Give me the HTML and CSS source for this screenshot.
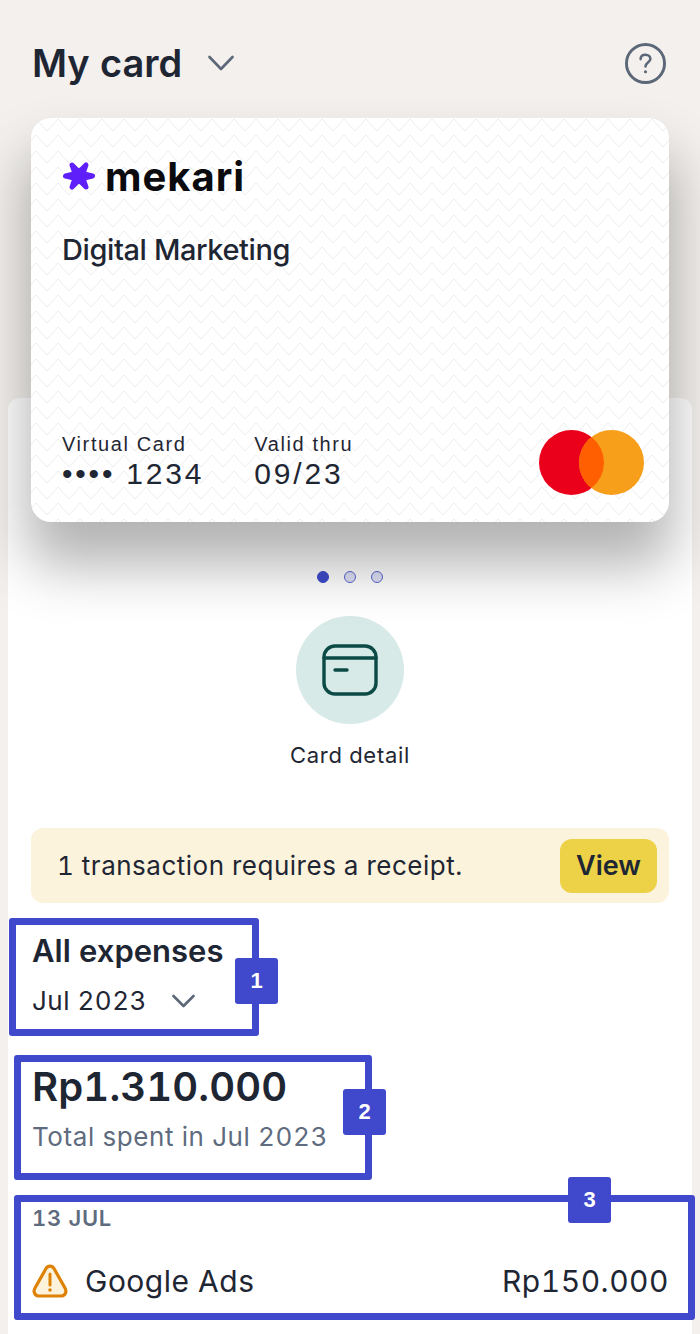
FILE: index.html
```html
<!DOCTYPE html>
<html lang="en">
<head>
  <meta charset="UTF-8" />
  <meta name="viewport" content="width=device-width, initial-scale=1.0" />
  <title>My card</title>
  <link rel="stylesheet" href="styles.css">
</head>
<body>

  <div class="app-container">
    <header class="top-bar">
      <div class="top-title">
        <h1>My card</h1>
        <svg class="chevron" width="26" height="16" viewBox="0 0 26 16"><path d="M1.5 2 L13 14 L24.5 2" /></svg>
      </div>
      <svg class="help-icon" width="41" height="41" viewBox="0 0 42 42">
        <circle cx="21" cy="21" r="19.5" />
        <path d="M16 16.5 C16 13.5 18 12 21 12 C24 12 26 14 26 16.5 C26 19.5 21 20 21 24" />
        <circle class="help-dot" cx="21" cy="29.5" r="1.6" />
      </svg>
    </header>

    <div class="card">
      <div class="card-logo">
        <svg width="34" height="30" viewBox="0 0 34 30">
          <path fill="#5f1ffb" stroke="#5f1ffb" stroke-width="5" stroke-linejoin="round" d="M3.5 15 L13 12.8 L10 4 L17 11 L24 4 L21 12.8 L30.5 15 L21 17.2 L24 26 L17 19 L10 26 L13 17.2 Z" />
        </svg>
        <span class="logo-word">mekari</span>
      </div>
      <div class="card-name">Digital Marketing</div>
      <div class="card-bottom">
        <div class="card-field card-number">
          <span class="field-label">Virtual Card</span>
          <span class="field-value">•••• 1234</span>
        </div>
        <div class="card-field">
          <span class="field-label">Valid thru</span>
          <span class="field-value">09/23</span>
        </div>
        <svg class="mc-logo" width="105" height="65" viewBox="0 0 105 65">
          <circle cx="32.5" cy="32.5" r="32.5" fill="#eb001b" />
          <circle cx="72.5" cy="32.5" r="32.5" fill="#f79e1b" />
          <path fill="#ff5f00" d="M52.5 6.9 A32.5 32.5 0 0 1 52.5 58.1 A32.5 32.5 0 0 1 52.5 6.9 Z" />
        </svg>
      </div>
    </div>

    <main class="panel">
      <div class="dots">
        <span class="dot active"></span>
        <span class="dot"></span>
        <span class="dot"></span>
      </div>

      <div class="card-action">
        <div class="action-circle">
          <svg width="58" height="52" viewBox="0 0 58 52">
            <rect x="3" y="2" width="52" height="48" rx="11" />
            <path d="M3 14 H55" />
            <path class="dash" d="M14 26 H26" />
          </svg>
        </div>
        <span>Card detail</span>
      </div>

      <div class="receipt-banner">
        <span>1 transaction requires a receipt.</span>
        <button class="view-btn">View</button>
      </div>

      <section class="expenses">
        <h2>All expenses</h2>
        <div class="month-select">
          <span>Jul 2023</span>
          <svg class="chevron" width="23" height="14" viewBox="0 0 23 14"><path d="M1.5 2 L11.5 12 L21.5 2" /></svg>
        </div>
      </section>

      <section class="total-spent">
        <div class="total-amount">Rp1.310.000</div>
        <div class="total-label">Total spent in Jul 2023</div>
      </section>

      <section class="tx-group">
        <div class="tx-date">13 JUL</div>
        <div class="tx-row">
          <svg width="36" height="34" viewBox="0 0 36 34">
            <path class="warn-shape" d="M14 4.5 C16 1.2 20 1.2 22 4.5 L33 24 C35.2 28 33 32 29 32 L7 32 C3 32 0.8 28 3 24 Z" />
            <path class="warn-mark" d="M18 10 V21" />
            <circle class="warn-dot" cx="18" cy="26" r="1.8" />
          </svg>
          <span class="tx-name">Google Ads</span>
          <span class="tx-amount">Rp150.000</span>
        </div>
      </section>
    </main>
  </div>

  <!-- numbered callouts on top of the screenshot -->
  <div class="callout callout-1"><span class="badge">1</span></div>
  <div class="callout callout-2"><span class="badge">2</span></div>
  <div class="callout callout-3"><span class="badge">3</span></div>

</body>
</html>
```

FILE: styles.css
```css
* {
  box-sizing: border-box;
  margin: 0;
  padding: 0;
}

body {
  background: #f3f0ed;
  font-family: 'Inter', 'Liberation Sans', sans-serif;
  font-variant-numeric: tabular-nums;
  color: #1f2633;
  position: relative;
  height: 1334px;
  overflow: hidden;
}

.app-container {
  display: flex;
  flex-direction: column;
  height: 100%;
}

.chevron path {
  fill: none;
  stroke: #5c6878;
  stroke-width: 2.6;
  stroke-linecap: round;
  stroke-linejoin: round;
}

.top-bar {
  display: flex;
  justify-content: space-between;
  align-items: center;
  height: 42px;
  margin: 42px 34px 34px 32px;
}

.top-title {
  display: flex;
  align-items: center;
  gap: 26px;
}

.top-title h1 {
  font-size: 38px;
  font-weight: 600;
}

.help-icon circle,
.help-icon path {
  fill: none;
  stroke: #5c6878;
  stroke-width: 3;
  stroke-linecap: round;
}

.help-icon path {
  stroke-width: 2.6;
}

.help-icon .help-dot {
  fill: #5c6878;
  stroke: none;
}

/* card */
.card {
  position: relative;
  z-index: 1;
  display: flex;
  flex-direction: column;
  height: 404px;
  margin: 0 31px;
  padding: 38px 25px 26px 31px;
  border-radius: 20px;
  background-color: #fff;
  background-image: url("data:image/svg+xml,%3Csvg xmlns='http://www.w3.org/2000/svg' width='22' height='16'%3E%3Cpath d='M0 13 L11 1 L22 13' fill='none' stroke='%23ebeced' stroke-width='1'/%3E%3C/svg%3E");
  background-position: -6px 0;
  box-shadow: 0 40px 56px 4px rgba(0, 0, 0, 0.3);
}

.card-logo {
  display: flex;
  align-items: center;
  gap: 9px;
  height: 40px;
}

.logo-word {
  font-size: 40px;
  font-weight: 700;
  color: #0b0b0f;
  letter-spacing: 1px;
}

.card-name {
  margin-top: 36px;
  font-size: 29px;
  font-weight: 500;
  letter-spacing: -0.4px;
}

.card-bottom {
  display: flex;
  align-items: flex-end;
  gap: 50px;
  margin-top: auto;
}

.card-field {
  display: flex;
  flex-direction: column;
  gap: 1px;
  margin-bottom: 5px;
  font-family: 'Liberation Sans', sans-serif;
}

.field-label {
  font-size: 20px;
  letter-spacing: 1.6px;
}

.field-value {
  font-size: 30px;
  letter-spacing: 2.8px;
}

.mc-logo {
  margin-left: auto;
  margin-bottom: 1px;
}

/* panel behind the card */
.panel {
  flex: 1;
  margin: -124px 8px 0;
  padding: 173px 23px 0;
  background: #fff;
  border-radius: 12px 12px 0 0;
}

.dots {
  display: flex;
  justify-content: center;
  gap: 15px;
}

.dot {
  width: 12px;
  height: 12px;
  border-radius: 50%;
  background: #dfe1f6;
  border: 1.2px solid #5b66d2;
}

.dot.active {
  background: #3f4bcc;
  border-color: #3f4bcc;
}

.card-action {
  display: flex;
  flex-direction: column;
  align-items: center;
  gap: 18px;
  margin-top: 33px;
  font-size: 22px;
  letter-spacing: 0.7px;
}

.action-circle {
  display: flex;
  align-items: center;
  justify-content: center;
  width: 108px;
  height: 108px;
  border-radius: 50%;
  background: #d7eae7;
}

.action-circle rect,
.action-circle path {
  fill: none;
  stroke: #0b4a45;
  stroke-width: 3.4;
  stroke-linecap: round;
}

.receipt-banner {
  display: flex;
  justify-content: space-between;
  align-items: center;
  height: 75px;
  margin-top: 60px;
  padding: 0 12px 0 26px;
  border-radius: 12px;
  background: #fcf3dd;
  font-size: 26px;
  letter-spacing: 0.5px;
}

.view-btn {
  width: 97px;
  height: 54px;
  border: none;
  border-radius: 12px;
  background: #edd147;
  color: #1f2633;
  font-family: inherit;
  font-size: 27px;
  font-weight: 600;
}

.expenses,
.total-spent,
.tx-group {
  margin-left: 1px;
}

.expenses {
  margin-top: 29px;
}

.expenses h2 {
  font-size: 31px;
  font-weight: 600;
}

.month-select {
  display: flex;
  align-items: center;
  gap: 25px;
  margin-top: 16px;
  font-size: 26px;
  letter-spacing: 0.5px;
}

.total-spent {
  margin-top: 46px;
}

.total-amount {
  font-size: 40px;
  font-weight: 600;
  letter-spacing: 0.15px;
}

.total-label {
  margin-top: 10px;
  font-size: 26px;
  letter-spacing: 0.6px;
  color: #5f6b7e;
}

.tx-group {
  margin-top: 53px;
}

.tx-date {
  font-size: 22px;
  font-weight: 600;
  letter-spacing: 0.7px;
  color: #5f6b7e;
}

.tx-row {
  display: flex;
  align-items: center;
  margin-top: 32px;
  font-size: 30px;
  letter-spacing: 0.5px;
}

.warn-shape {
  fill: #fdf3dc;
  stroke: #dd8204;
  stroke-width: 3.2;
}

.warn-mark {
  fill: none;
  stroke: #dd8204;
  stroke-width: 3;
  stroke-linecap: round;
}

.warn-dot {
  fill: #dd8204;
}

.tx-name {
  margin-left: 17px;
}

.tx-amount {
  margin-left: auto;
  letter-spacing: 0.5px;
}

/* callouts */
.callout {
  position: absolute;
  z-index: 2;
  border: 7px solid #4048cc;
  border-radius: 3px;
}

.callout-1 {
  left: 9px;
  top: 918px;
  width: 250px;
  height: 118px;
}

.callout-2 {
  left: 14px;
  top: 1055px;
  width: 358px;
  height: 125px;
}

.callout-3 {
  left: 14px;
  top: 1195px;
  width: 681px;
  height: 125px;
}

.badge {
  position: absolute;
  display: flex;
  align-items: center;
  justify-content: center;
  width: 43px;
  height: 46px;
  border-radius: 3px;
  background: #4048cc;
  color: #fff;
  font-family: 'Liberation Sans', sans-serif;
  font-size: 22px;
  font-weight: 700;
}

.callout-1 .badge {
  left: 219px;
  top: 33px;
}

.callout-2 .badge {
  left: 322px;
  top: 27px;
}

.callout-3 .badge {
  left: 547px;
  top: -25px;
}
```
